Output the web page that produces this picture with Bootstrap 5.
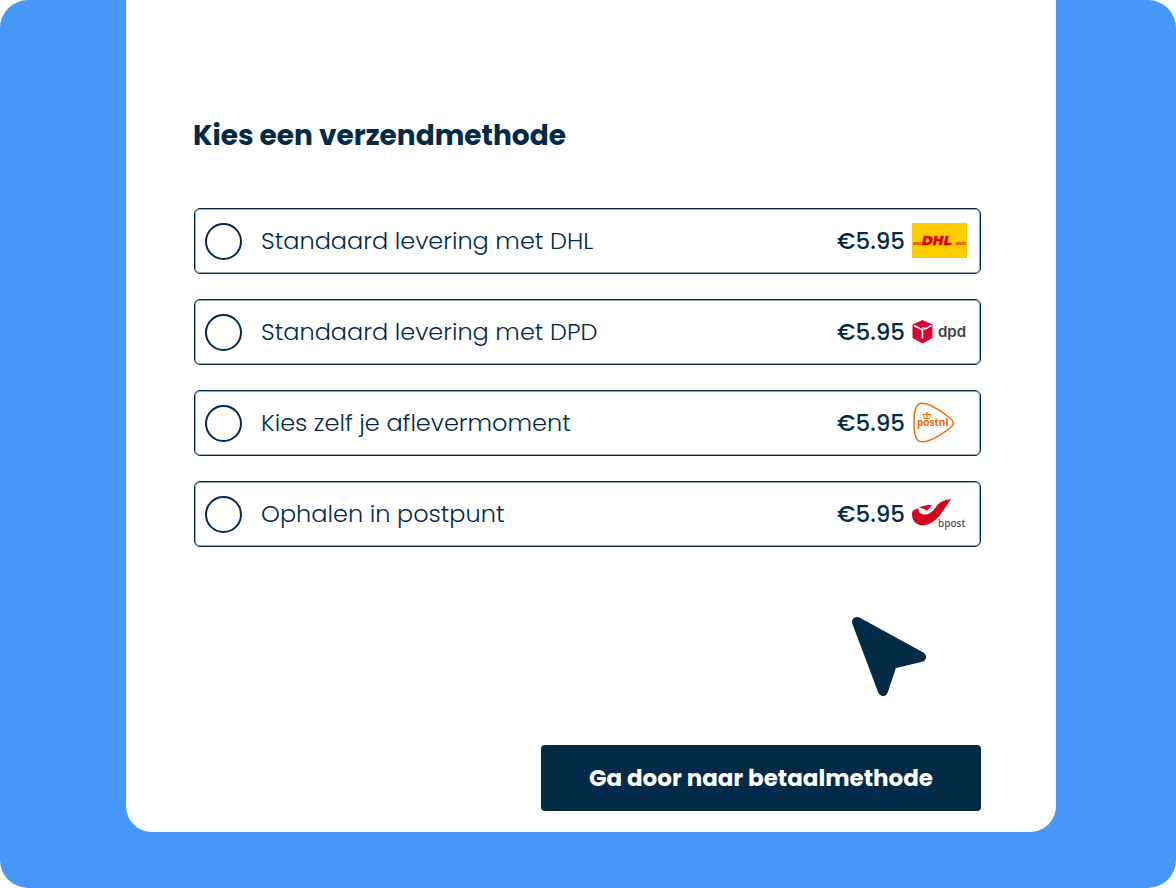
<!DOCTYPE html>
<html lang="nl">
<head>
<meta charset="utf-8">
<meta name="viewport" content="width=device-width, initial-scale=1">
<title>Kies een verzendmethode</title>
<link href="https://cdn.jsdelivr.net/npm/bootstrap@5.3.0/dist/css/bootstrap.min.css" rel="stylesheet">
<style>
  :root { --navy: #032b47; --sky: #4797f8; }
  body { font-family: Poppins, Inter, "Open Sans", sans-serif; color: var(--navy); background: #fff; }
  .stage { min-height: 100vh; background: var(--sky); border-radius: 28px; padding: 0 120px 56px 126px; }
  .panel { border-radius: 0 0 26px 26px; padding: 112px 75px 21px 68px; }
  .panel-title { font-size: 28px; line-height: 48px; font-weight: 700; margin: 0 0 48px -1px; }
  .methods { gap: 25px; }
  .method { height: 66px; border: 1px solid var(--navy); box-shadow: inset 0 0 0 1px rgba(3, 43, 71, .4); border-radius: 6px; padding: 0 12px 0 10px; cursor: pointer; }
  .method .form-check-input { width: 37px; height: 37px; margin: 0 19px 0 0; border: 2px solid var(--navy); flex: none; }
  .method .form-check-input:checked { background-color: var(--navy); }
  .method-name { font-size: 24px; line-height: 36px; font-weight: 300; }
  .price { font-size: 23px; line-height: 36px; font-weight: 500; margin-right: 7px; }
  .carrier { width: 56px; height: 42px; flex: none; }
  .pointer-row { padding: 68px 54px 48px 0; }
  .btn-next { width: 440px; height: 66px; font-size: 23px; font-weight: 700; border-radius: 4px; border: 0; color: #fff; background: var(--navy); }
  .btn-next:hover { color: #fff; background: #0a3d61; }
  @media (max-width: 900px) {
    .stage { padding: 0 16px 32px; }
    .panel { padding: 48px 16px 20px; }
    .method { height: auto; min-height: 66px; }
    .btn-next { width: 100%; }
  }
</style>
</head>
<body>
<div class="stage d-flex flex-column">
  <main class="panel bg-white">
    <form>
      <h1 class="panel-title">Kies een verzendmethode</h1>
      <div class="methods d-flex flex-column">
        <label class="method d-flex align-items-center" for="dhl">
          <input class="form-check-input" type="radio" name="method" id="dhl">
          <span class="method-name flex-grow-1">Standaard levering met DHL</span>
          <span class="price">€5.95</span>
          <svg class="carrier" viewBox="0 0 56 42" aria-hidden="true">
            <rect x="0" y="3" width="55" height="35" fill="#fc0"/>
            <path d="M1 22h9l-1 3H1zM44 22h10v3h-11z" fill="#ea6a0c"/>
            <text x="10" y="25" font-family="DejaVu Sans, sans-serif" font-size="13" font-weight="700" font-style="italic" fill="#d40511" stroke="#d40511" stroke-width=".7">DHL</text>
          </svg>
        </label>
        <label class="method d-flex align-items-center" for="dpd">
          <input class="form-check-input" type="radio" name="method" id="dpd">
          <span class="method-name flex-grow-1">Standaard levering met DPD</span>
          <span class="price">€5.95</span>
          <svg class="carrier" viewBox="0 0 56 42" aria-hidden="true">
            <path d="M10.500 9 20.500 13.500V27L10.500 32.500 .5 27V13.500z" fill="#dc0032"/>
            <path d="M2 14.500 10.500 19V27.500M19.500 14.500 13 18 10.500 16.500" fill="none" stroke="#fff" stroke-width="1.600"/>
            <text x="26" y="26" font-family="Inter, sans-serif" font-size="15" font-weight="600" fill="#414042">dpd</text>
          </svg>
        </label>
        <label class="method d-flex align-items-center" for="postnl">
          <input class="form-check-input" type="radio" name="method" id="postnl">
          <span class="method-name flex-grow-1">Kies zelf je aflevermoment</span>
          <span class="price">€5.95</span>
          <svg class="carrier" viewBox="0 0 56 42" aria-hidden="true">
            <path d="M8 1.500C14 .5 26 7 36 14.500C43 19.500 43 22.500 36 27.500C26 35.500 14 41 8 39.500C3 38 2 29 2 20.500S3 3 8 1.500z" fill="none" stroke="#f56900" stroke-width="1.500"/>
            <path d="M12.500 16.500 11 12.500M17.500 16.500 19 12.500M12 16.500h6M15 16.500V10M13.500 11h3M11 12.500h8" fill="none" stroke="#f56900" stroke-width=".9"/>
            <text x="5" y="24" font-family="Open Sans, sans-serif" font-size="10" font-weight="700" fill="#f56900">postnl</text>
          </svg>
        </label>
        <label class="method d-flex align-items-center" for="bpost">
          <input class="form-check-input" type="radio" name="method" id="bpost">
          <span class="method-name flex-grow-1">Ophalen in postpunt</span>
          <span class="price">€5.95</span>
          <svg class="carrier" viewBox="0 0 56 42" aria-hidden="true">
            <path d="M39 6C32 7 27 9 24 14C20 20 15 23 10 21C7 20 6 18 7 15.500C3 16 0 17 0 21C0 29 6 34 14 32C26 29 32 16 39 6z" fill="#d2051e"/>
            <path d="M7 15C11 12 15 12 20 12L15 18C13 16 10 15 7 15z" fill="#d2051e"/>
            <text x="26" y="34" font-family="Open Sans, sans-serif" font-size="10" font-weight="600" fill="#575757">bpost</text>
          </svg>
        </label>
      </div>
      <div class="pointer-row d-flex justify-content-end">
        <svg width="76" height="82" viewBox="0 0 76 82" aria-hidden="true">
          <path d="M6 7 70 42 41 49 32 76z" fill="#032b47" stroke="#032b47" stroke-width="10" stroke-linejoin="round"/>
        </svg>
      </div>
      <div class="d-flex justify-content-end">
        <button class="btn btn-next" type="button">Ga door naar betaalmethode</button>
      </div>
    </form>
  </main>
</div>
<script src="https://cdn.jsdelivr.net/npm/bootstrap@5.3.0/dist/js/bootstrap.bundle.min.js"></script>
</body>
</html>
